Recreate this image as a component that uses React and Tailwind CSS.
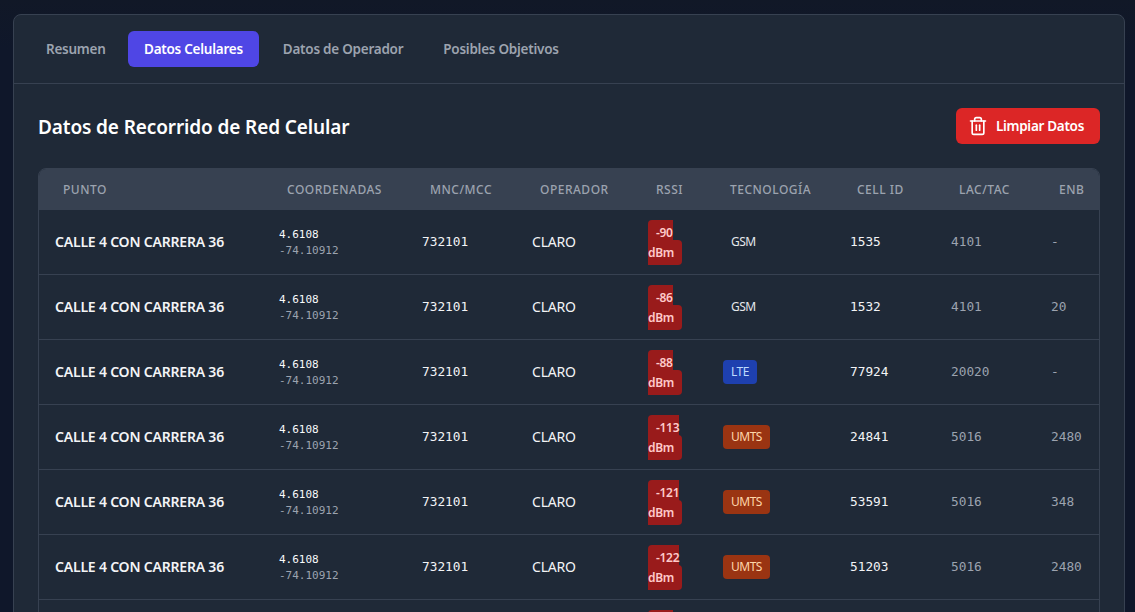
import { Trash2 } from "lucide-react";

const rows = [
  { rssi: "-90", tech: "GSM", cell: "1535", lac: "4101", enb: "-" },
  { rssi: "-86", tech: "GSM", cell: "1532", lac: "4101", enb: "20" },
  { rssi: "-88", tech: "LTE", cell: "77924", lac: "20020", enb: "-" },
  { rssi: "-113", tech: "UMTS", cell: "24841", lac: "5016", enb: "2480" },
  { rssi: "-121", tech: "UMTS", cell: "53591", lac: "5016", enb: "348" },
  { rssi: "-122", tech: "UMTS", cell: "51203", lac: "5016", enb: "2480" },
  { rssi: "-95", tech: "GSM", cell: "1540", lac: "4101", enb: "-" },
];

const techStyles = {
  GSM: "text-[#e5e7eb]",
  LTE: "bg-[#1e40af] text-[#bfdbfe]",
  UMTS: "bg-[#9a3412] text-[#fed7aa]",
};

const tabs = ["Resumen", "Datos Celulares", "Datos de Operador", "Posibles Objetivos"];

const columns = [
  ["PUNTO", "w-[224px]"],
  ["COORDENADAS", "w-[143px]"],
  ["MNC/MCC", "w-[110px]"],
  ["OPERADOR", "w-[116px]"],
  ["RSSI", "w-[75px]"],
  ["TECNOLOGÍA", "w-[127px] pl-[23px]"],
  ["CELL ID", "w-[101px] pl-[23px]"],
  ["LAC/TAC", "w-[100px]"],
  ["ENB", "w-[64px]"],
];

const sans = "font-['Noto_Sans',sans-serif]";
const mono = "font-['DejaVu_Sans_Mono',monospace]";

const cell = "border-b border-[#374151] px-4";

export default function App() {
  return (
    <div className={`h-screen overflow-hidden bg-linear-to-b from-[#111827] to-[#0f172a] to-[8%] px-[13px] pt-[14px] ${sans}`}>
      <div className="w-[1112px] rounded-lg border border-[#374151] bg-[#1f2937]">
        <nav className="flex h-[69px] items-center gap-2 border-b border-[#374151] px-4">
          {tabs.map((tab, i) => (
            <button
              key={tab}
              className={`h-9 rounded-md px-4 text-[13.5px] font-semibold tracking-[-0.25px] ${
                i === 0 ? "w-[90px]" : ""
              } ${i === 1 ? "bg-[#4f46e5] text-white" : "text-[#9ca3af]"}`}
            >
              {tab}
            </button>
          ))}
        </nav>

        <div className="px-6 pt-6">
          <div className="mb-6 flex items-center justify-between">
            <h2 className="pt-[2px] text-[19px] font-semibold tracking-[-0.12px] text-white">Datos de Recorrido de Red Celular</h2>
            <button className="flex h-9 w-[144px] items-center justify-center gap-2 rounded-md bg-[#dc2626] pr-1 text-[13.5px] font-semibold tracking-[-0.3px] text-white">
              <Trash2 className="h-5 w-5" />
              Limpiar Datos
            </button>
          </div>

          <div className="overflow-hidden rounded-lg border border-[#374151]">
            <table className="w-[1060px] table-fixed border-separate border-spacing-0 text-left">
              <thead className="bg-[#374151]">
                <tr>
                  {columns.map(([label, width]) => (
                    <th key={label} className={`${width} h-[41px] px-6 text-xs font-medium tracking-[0.5px] text-[#9ca3af]`}>
                      {label}
                    </th>
                  ))}
                </tr>
              </thead>
              <tbody>
                {rows.map((row) => (
                  <tr key={row.cell} className="h-[65px]">
                    <td className={`${cell} text-sm font-semibold tracking-[-0.2px] whitespace-nowrap text-[#f3f4f6]`}>
                      CALLE 4 CON CARRERA 36
                    </td>
                    <td className={`${cell} pt-[2px] text-[11px] leading-4 ${mono}`}>
                      <div className="text-[#f9fafb]">4.6108</div>
                      <div className="text-[#9ca3af]">-74.10912</div>
                    </td>
                    <td className={`${cell} text-[12.8px] text-[#f3f4f6] ${mono}`}>732101</td>
                    <td className={`${cell} text-sm tracking-[-0.2px] text-[#f3f4f6]`}>CLARO</td>
                    <td className={`${cell} pt-[2px] text-xs leading-5 font-semibold tracking-[-0.3px]`}>
                      <span className="rounded bg-[#991b1b] px-2 py-1 text-[#fecaca]">
                        {row.rssi} dBm
                      </span>
                    </td>
                    <td className={`${cell} text-xs tracking-[-0.5px]`}>
                      <span className={`inline-block rounded px-2 py-1 ${techStyles[row.tech]}`}>{row.tech}</span>
                    </td>
                    <td className={`${cell} text-[12.8px] text-[#f3f4f6] ${mono}`}>{row.cell}</td>
                    <td className={`${cell} text-[12.8px] text-[#9ca3af] ${mono}`}>{row.lac}</td>
                    <td className={`${cell} text-[12.8px] text-[#9ca3af] ${mono}`}>{row.enb}</td>
                  </tr>
                ))}
              </tbody>
            </table>
          </div>
        </div>
      </div>
    </div>
  );
}
